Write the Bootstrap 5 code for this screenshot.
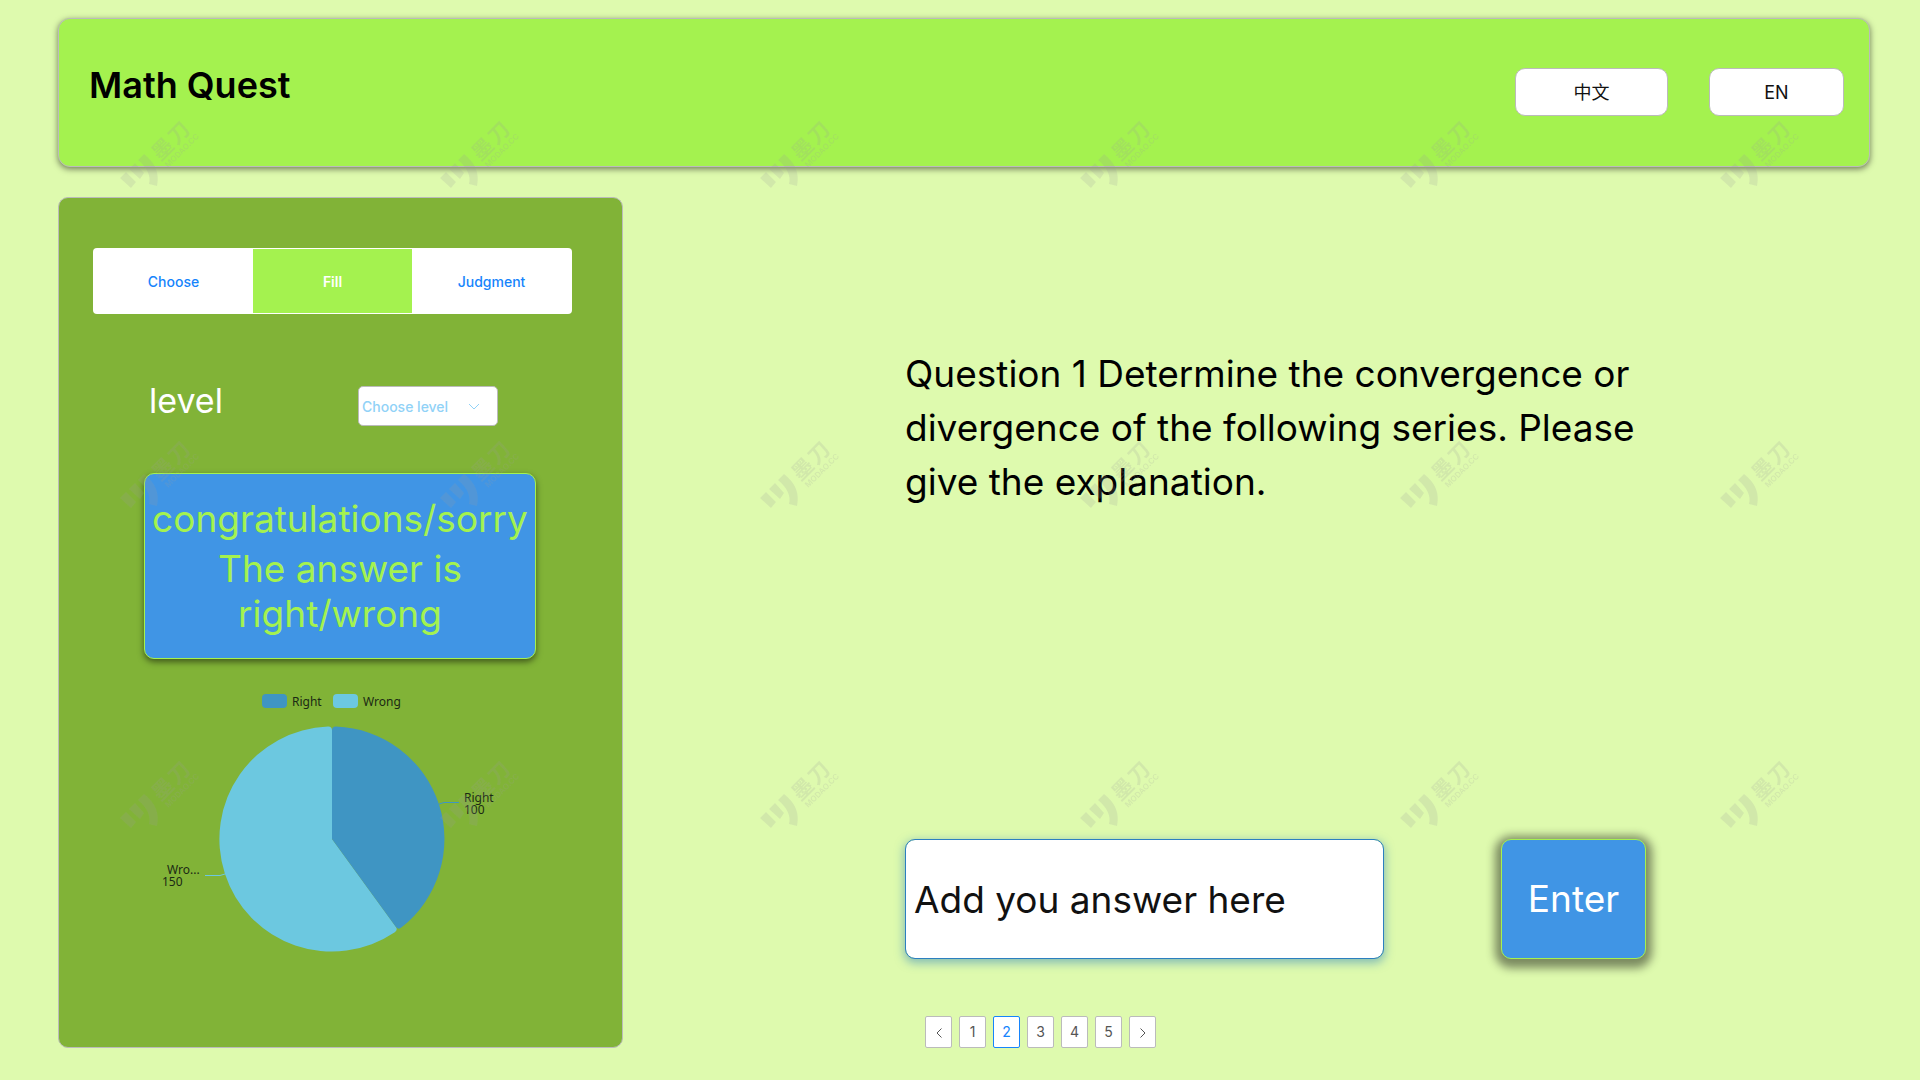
<!DOCTYPE html>
<html lang="en">
<head>
<meta charset="utf-8">
<meta name="viewport" content="width=device-width, initial-scale=1">
<title>Math Quest</title>
<link href="https://cdn.jsdelivr.net/npm/bootstrap@5.3.0/dist/css/bootstrap.min.css" rel="stylesheet">
<style>
  body { background: #defaae; color: #0b0b0b; font-family: Inter, "Noto Sans CJK SC", sans-serif; }
  .page { padding: 18px 50px 32px 58px; gap: 30px; }
  .topbar { background: #a4f24f; border: 1px solid #bbb; border-radius: 12px; box-shadow: 0 2px 6px rgba(0,0,0,.5); height: 149px; padding: 0 25px 0 30px; gap: 41px; }
  .brand { font-size: 36px; line-height: 54px; font-weight: 600; margin: 39px 0 0; color: #000; }
  .lang { background: #fff; border: 1px solid #bbb; border-radius: 10px; height: 48px; width: 153px; font-size: 18px; padding: 0; margin-top: 49px; color: #111; }
  .lang-en { width: 135px; }
  .side { background: #81b337; border: 1px solid #bbb; border-radius: 10px; flex: 0 0 565px; padding: 50px 50px 71px 34px; }
  .tabs { height: 66px; background: #fff; border-radius: 4px; padding: 1px; }
  .tabs .btn { border: 0; border-radius: 0; font-size: 14px; font-weight: 500; color: #1684fc; padding: 0; }
  .tabs .btn.active { background: #a4f24f; color: #fff; font-weight: 600; }
  .level { margin: 72px 74px 0 56px; height: 40px; }
  .level label { font-size: 34px; line-height: 40px; color: #fff; margin-top: -5px; }
  .level .form-select { width: 140px; height: 40px; border: 1px solid #bbb; border-radius: 5px; padding: 0 30px 0 3px; font-size: 14px; font-weight: 500; color: #91d2f7;
    background: #fff url("data:image/svg+xml,%3Csvg xmlns='http://www.w3.org/2000/svg' viewBox='0 0 12 12'%3E%3Cpath d='M1 4l5 5 5-5' fill='none' stroke='%2391d2f7'/%3E%3C/svg%3E") no-repeat right 17px center / 12px 12px; }
  .verdict { margin: 47px 36px 0 51px; height: 186px; background: #4095e5; border: 1px solid #a4f24f; border-radius: 10px; color: #a4f24f; box-shadow: 0 3px 6px rgba(0,0,0,.5); font-size: 37px; line-height: 45px; padding: 22px 0 0; }
  .verdict p { margin: 0 -10px 5px; }
  .chart { display: block; margin: 34px auto 0 59px; font-family: "Noto Sans", sans-serif; font-size: 12px; }
  .quiz { padding: 150px 0 0 282px; }
  .question { font-size: 37px; line-height: 54px; max-width: 760px; color: #000; }
  .answer { gap: 117px; margin-bottom: 57px; }
  .answer .form-control { width: 479px; height: 120px; border: 1px solid #2c7fc0; border-radius: 10px; box-shadow: 0 3px 10px 1px rgba(44,127,192,.5); font-size: 37px; padding: 0 8px; }
  .answer .form-control::placeholder { color: #111; opacity: 1; }
  .enter, .enter:hover { width: 145px; height: 120px; background: #4095e5; color: #fff; border: 1px solid #a4f24f; border-radius: 10px; box-shadow: 0 3px 10px 6px rgba(0,0,0,.45); font-size: 37px; padding: 0; }
  .pagination { gap: 8px; margin-left: 20px; }
  .pagination .page-item .page-link { width: 27px; height: 32px; padding: 0; border: 1px solid #bbb; border-radius: 2px; font-size: 14px; line-height: 30px; text-align: center; color: #555; background: #fff; }
  .pagination .page-item.active .page-link { border-color: #1684fc; color: #1684fc; }
  .stamps { pointer-events: none; z-index: 5; }
</style>
<script src="https://cdn.jsdelivr.net/npm/bootstrap@5.3.0/dist/js/bootstrap.bundle.min.js"></script>
</head>
<body>
<div class="page position-relative d-flex flex-column min-vh-100">
  <header class="topbar d-flex align-items-start">
    <h1 class="brand me-auto">Math Quest</h1>
    <button type="button" class="btn lang">中文</button>
    <button type="button" class="btn lang lang-en">EN</button>
  </header>
  <main class="d-flex flex-grow-1">
    <aside class="side">
      <div class="tabs d-flex">
        <button type="button" class="btn w-100">Choose</button>
        <button type="button" class="btn w-100 active">Fill</button>
        <button type="button" class="btn w-100">Judgment</button>
      </div>
      <div class="level d-flex justify-content-between">
        <label for="level">level</label>
        <select id="level" class="form-select"><option>Choose level</option></select>
      </div>
      <div class="verdict text-center">
        <p>congratulations/sorry</p>
        <div>The answer is right/wrong</div>
      </div>
      <svg class="chart" width="360" height="262" viewBox="0 0 360 262" role="img" aria-label="Right and wrong answers" fill="#1b2a14">
        <rect x="110" y="1" width="25" height="14" rx="4" fill="#3f95c3"/>
        <text x="140" y="13">Right</text>
        <rect x="181" y="1" width="25" height="14" rx="4" fill="#6cc8e0"/>
        <text x="211" y="13">Wrong</text>
        <g transform="translate(180 146)">
          <path d="M0 0L63.8 87.8Q66.1 91 62.8 93.3A112.5 112.5 0 1 1-4-112.4Q0-112.5 0-108.5Z" fill="#6cc8e0"/>
          <path d="M0 0V-108.5Q0-112.5 4-112.4A112.5 112.5 0 0 1 69.3 88.6Q66.1 91 63.8 87.8Z" fill="#3f95c3"/>
          <path d="M107-35L112-36.500H127" fill="none" stroke="#3f95c3"/>
          <path d="M-107 35L-112 36.500H-127" fill="none" stroke="#6cc8e0"/>
        </g>
        <text x="312" y="109">Right</text><text x="312" y="121">100</text>
        <text x="15" y="181">Wro...</text><text x="10" y="193">150</text>
      </svg>
    </aside>
    <section class="quiz flex-grow-1 d-flex flex-column">
      <p class="question mb-auto">Question 1 Determine the convergence or divergence of the following series. Please give the explanation.</p>
      <form class="answer d-flex">
        <label for="answer" class="visually-hidden">Answer</label>
        <input id="answer" type="text" class="form-control" placeholder="Add you answer here">
        <button type="button" class="btn enter">Enter</button>
      </form>
      <nav aria-label="Questions">
        <ul class="pagination mb-0">
          <li class="page-item"><a class="page-link" href="#" aria-label="Previous"><svg width="8" height="12" viewBox="0 0 8 12" fill="none" stroke="#555"><path d="M6.500 1.500L2 6l4.500 4.500"/></svg></a></li>
          <li class="page-item"><a class="page-link" href="#">1</a></li>
          <li class="page-item active"><a class="page-link" href="#" aria-current="page">2</a></li>
          <li class="page-item"><a class="page-link" href="#">3</a></li>
          <li class="page-item"><a class="page-link" href="#">4</a></li>
          <li class="page-item"><a class="page-link" href="#">5</a></li>
          <li class="page-item"><a class="page-link" href="#" aria-label="Next"><svg width="8" height="12" viewBox="0 0 8 12" fill="none" stroke="#555"><path d="M1.500 1.500L6 6l-4.500 4.500"/></svg></a></li>
        </ul>
      </nav>
    </section>
  </main>
  <svg class="stamps position-absolute top-0 start-0 w-100 h-100" aria-hidden="true">
    <defs>
      <pattern id="stamp" width="320" height="320" patternUnits="userSpaceOnUse">
        <g fill="#969696" fill-opacity=".19">
          <path d="M120 178l6-6 10 10-5 6zM129 169l6-6 9 10-4 6zM138 160l6-6Q161 167 157 186L149 184Q152 172 138 160z"/>
          <g transform="translate(162 149) rotate(-45)" font-weight="700">
            <text x="-10" y="8" font-size="21" font-family="Noto Sans CJK SC, sans-serif">墨</text>
            <text x="13" y="8" font-size="21" font-family="Noto Sans CJK SC, sans-serif">刀</text>
            <text x="-9" y="18" font-size="8" font-family="Inter, sans-serif" font-weight="600">MODAO.CC</text>
          </g>
        </g>
      </pattern>
    </defs>
    <rect width="100%" height="100%" fill="url(#stamp)"/>
  </svg>
</div>
</body>
</html>
